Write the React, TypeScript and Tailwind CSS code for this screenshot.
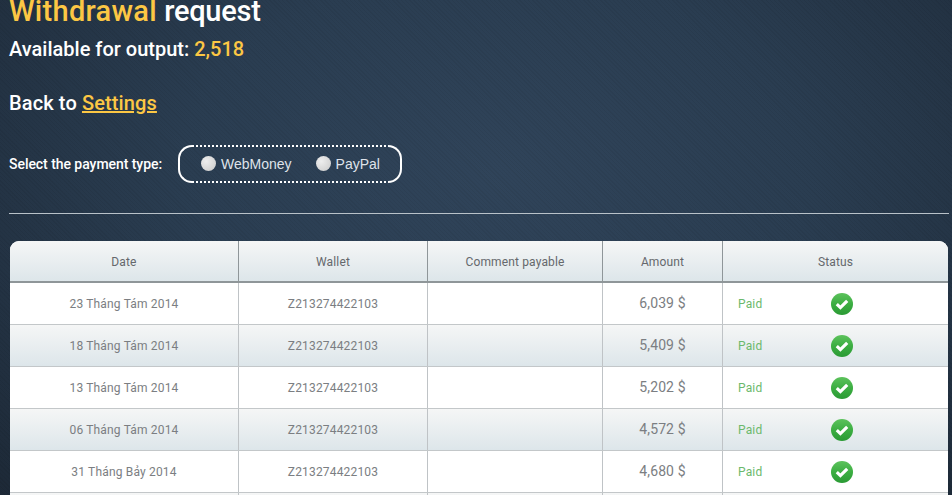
import React from "react";

const rows = [
  ["23 Tháng Tám 2014", "6,039 $"],
  ["18 Tháng Tám 2014", "5,409 $"],
  ["13 Tháng Tám 2014", "5,202 $"],
  ["06 Tháng Tám 2014", "4,572 $"],
  ["31 Tháng Bảy 2014", "4,680 $"],
  ["26 Tháng Bảy 2014", "4,218 $"],
];

function Check() {
  return (
    <svg width="22" height="22" viewBox="0 0 22 22" className="block">
      <defs>
        <linearGradient id="chk" x1="0" y1="0" x2="0" y2="1">
          <stop offset="0" stopColor="#5cc25c" />
          <stop offset="0.5" stopColor="#3cae42" />
          <stop offset="1" stopColor="#2a9a34" />
        </linearGradient>
      </defs>
      <circle cx="11" cy="11" r="11" fill="url(#chk)" />
      <path d="M5.8 11.2 L9.4 14.6 L16.2 7.8" fill="none" stroke="#fff" strokeWidth="3.2" />
    </svg>
  );
}

function Radio({ label, className }: { label: string; className?: string }) {
  return (
    <label className={`flex items-center gap-[5px] ${className ?? ""}`}>
      <span className="w-[15px] h-[15px] rounded-full bg-[radial-gradient(circle_at_35%_35%,#eeeeee,#c9c9c9)] -mt-[2px]" />
      <span className="font-['Liberation_Sans',sans-serif] text-[14px] text-[#dfe3ea]">{label}</span>
    </label>
  );
}

const cell = "border-r border-[#bfc3c6] text-center";
const dots = "h-[2px] bg-[repeating-linear-gradient(90deg,#ffffff_0px,#ffffff_2px,transparent_2px,transparent_4px)]";

export default function App() {
  return (
    <div className="h-[495px] w-[952px] overflow-hidden font-['Roboto',sans-serif] text-white bg-[repeating-linear-gradient(45deg,rgba(0,0,0,0.05)_0px,rgba(0,0,0,0.05)_1px,transparent_1px,transparent_3px),radial-gradient(ellipse_at_52%_35%,#30445a_0%,#2a3d51_45%,#1d2937_100%)]">
      <div className="pl-[9px] pr-[3px]">
        <h1 className="text-[29px] leading-[36px] font-medium -mt-[7px] h-[29px]">
          <span className="text-[#fcc744] tracking-[0.3px]">Withdrawal</span>{" "}
          <span className="tracking-[-0.25px]">request</span>
        </h1>
        <p className="text-[20px] leading-[24px] font-medium mt-[15px]">
          Available for output: <span className="text-[#fcc744]">2,518</span>
        </p>
        <p className="text-[20px] leading-[24px] font-medium tracking-[0.12px] mt-[30px]">
          Back to <a className="text-[#fcc744] underline">Settings</a>
        </p>
        <div className="flex items-center mt-[30px] h-[38px]">
          <span className="text-[14px] font-medium tracking-[-0.05px] w-[169px]">Select the payment type:</span>
          <div className="flex h-[38px] w-[224px]">
            <div className="w-[14px] border-2 border-r-0 border-white rounded-l-[14px]" />
            <div className="flex-1 flex flex-col justify-between">
              <div className={dots} />
              <div className="flex items-center">
                <Radio label="WebMoney" className="ml-[9px]" />
                <Radio label="PayPal" className="ml-[24px]" />
              </div>
              <div className={dots} />
            </div>
            <div className="w-[14px] border-2 border-l-0 border-white rounded-r-[14px]" />
          </div>
        </div>
        <div className="h-px bg-[#b9c2c9] mt-[30px] w-[940px]" />
        <div className="mt-[27px] ml-px w-[938px] rounded-t-[9px] overflow-hidden bg-white text-[#7b7e82]">
          <div className="flex h-[42px] items-stretch border-b-2 border-[#8f9699] text-[12px] tracking-[0.14px] bg-[linear-gradient(#f5f6f6,#dde6ea)] text-[#65686c]">
            <div className="w-[229px] border-r border-[#8f9699] flex items-center justify-center pt-px">Date</div>
            <div className="w-[189px] border-r border-[#8f9699] flex items-center justify-center pt-px">Wallet</div>
            <div className="w-[175px] border-r border-[#8f9699] flex items-center justify-center pt-px">Comment payable</div>
            <div className="w-[120px] border-r border-[#8f9699] flex items-center justify-center pt-px">Amount</div>
            <div className="flex-1 flex items-center justify-center pt-px">Status</div>
          </div>
          {rows.map(([date, amount], i) => (
            <div
              key={i}
              className={`flex h-[42px] items-stretch border-b border-[#c3c7c9] text-[12px] tracking-[0.17px] ${
                i % 2 ? "bg-[linear-gradient(#f5f6f6,#dde6ea)]" : "bg-white"
              }`}
            >
              <div className={`w-[229px] flex items-center justify-center ${cell}`}>{date}</div>
              <div className={`w-[189px] flex items-center justify-center ${cell}`}>Z213274422103</div>
              <div className={`w-[175px] ${cell}`} />
              <div className={`w-[120px] flex items-center justify-center text-[14px] tracking-[0.1px] ${cell}`}>{amount}</div>
              <div className="flex-1 flex items-center pl-[15px]">
                <span className="text-[#6cb96c] w-[93px]">Paid</span>
                <Check />
              </div>
            </div>
          ))}
        </div>
      </div>
    </div>
  );
}
